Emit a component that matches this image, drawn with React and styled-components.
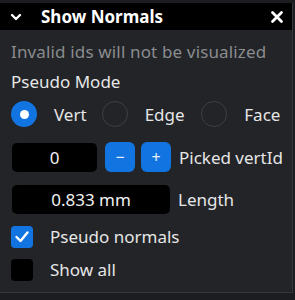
import React, { useState } from 'react'
import styled, { createGlobalStyle } from 'styled-components'

const Global = createGlobalStyle`
    html, body {
        margin: 0;
        padding: 0;
        background: #1b1d20;
    }
    body {
        font-family: "Noto Sans", "Open Sans", sans-serif;
        width: 295px;
        height: 300px;
        overflow: hidden;
    }
`

const Panel = styled.div`
    width: 293px;
    height: 290px;
    margin-top: 3px;
    background: #222428;
    border-right: 1px solid #34373c;
    border-bottom: 1px solid #34373c;
    box-sizing: border-box;
    color: #e6e6e6;
`

const TitleBar = styled.div`
    height: 27px;
    background: #000;
    display: flex;
    align-items: center;
    padding: 0 8px 0 10px;
    font-weight: 700;
    font-size: 17px;
    color: #fff;
`

const Title = styled.span`
    flex: 1;
    margin-left: 19px;
`

const Body = styled.div`
    padding: 7px 11px 0 11px;
    display: flex;
    flex-direction: column;
`

const Note = styled.div`
    color: #8a8c8f;
    font-size: 17px;
    letter-spacing: 0.15px;
    line-height: 30px;
    white-space: nowrap;
`

const Label = styled.div`
    font-size: 17px;
    line-height: 30px;
`

const RadioRow = styled.div`
    display: flex;
    align-items: center;
    height: 34px;
`

const RadioItem = styled.label`
    display: flex;
    align-items: center;
    width: ${p => p.w}px;
    font-size: 17px;
`

const RadioDot = styled.span`
    width: 26px;
    height: 26px;
    border-radius: 50%;
    box-sizing: border-box;
    background: ${p => (p.on ? '#1274e0' : '#222428')};
    border: ${p => (p.on ? 'none' : '1px solid #3d4045')};
    display: flex;
    align-items: center;
    justify-content: center;
    margin-right: 17px;
    &::after {
        content: '';
        width: 9px;
        height: 9px;
        border-radius: 50%;
        background: #fff;
        display: ${p => (p.on ? 'block' : 'none')};
    }
`

const FieldRow = styled.div`
    display: flex;
    align-items: center;
    height: 30px;
    white-space: nowrap;
    margin-top: ${p => p.mt || 0}px;
`

const Field = styled.div`
    flex: none;
    width: ${p => p.w}px;
    height: 29px;
    background: #000;
    border-radius: 5px;
    display: flex;
    align-items: center;
    justify-content: center;
    font-size: 17px;
    color: #f2f2f2;
    margin-left: 1px;
`

const StepButton = styled.button`
    flex: none;
    width: 30px;
    height: 30px;
    border: none;
    border-radius: 6px;
    background: #1274e0;
    color: #e8f0fb;
    font-family: inherit;
    font-size: 16px;
    padding: 0;
    margin-left: ${p => p.ml}px;
    display: flex;
    align-items: center;
    justify-content: center;
`

const FieldLabel = styled.span`
    font-size: 17px;
    margin-left: 8px;
`

const CheckRow = styled.label`
    display: flex;
    align-items: center;
    height: 33px;
    font-size: 17px;
    margin-top: ${p => p.mt || 0}px;
`

const CheckBox = styled.span`
    width: 22px;
    height: 22px;
    border-radius: 4px;
    background: ${p => (p.on ? '#1274e0' : '#000')};
    display: flex;
    align-items: center;
    justify-content: center;
    margin-right: 17px;
`

const Chevron = () => (
    <svg width="12" height="8" viewBox="0 0 12 8">
        <path d="M2 2 L6 6 L10 2" stroke="#fff" strokeWidth="2.4" fill="none" strokeLinecap="round" strokeLinejoin="round" />
    </svg>
)

const Close = () => (
    <svg width="14" height="14" viewBox="0 0 14 14">
        <path d="M2.5 2.5 L11.5 11.5 M11.5 2.5 L2.5 11.5" stroke="#fff" strokeWidth="2.8" strokeLinecap="round" />
    </svg>
)

const Check = () => (
    <svg width="16" height="14" viewBox="0 0 16 14">
        <path d="M2.5 7 L6.5 11 L13.5 2.5" stroke="#fff" strokeWidth="2.4" fill="none" strokeLinecap="round" strokeLinejoin="round" />
    </svg>
)

const App = () => {
    const [mode, setMode] = useState('Vert')
    return (
        <>
            <Global />
            <Panel>
                <TitleBar>
                    <Chevron />
                    <Title>Show Normals</Title>
                    <Close />
                </TitleBar>
                <Body>
                    <Note>Invalid ids will not be visualized</Note>
                    <Label>Pseudo Mode</Label>
                    <RadioRow>
                        {[['Vert', 91], ['Edge', 100], ['Face', 80]].map(([m, w]) => (
                            <RadioItem key={m} w={w} onClick={() => setMode(m)}>
                                <RadioDot on={mode === m} />
                                {m}
                            </RadioItem>
                        ))}
                    </RadioRow>
                    <FieldRow mt={11}>
                        <Field w={85}>0</Field>
                        <StepButton ml={8}>−</StepButton>
                        <StepButton ml={6}>+</StepButton>
                        <FieldLabel>Picked vertId</FieldLabel>
                    </FieldRow>
                    <FieldRow mt={12}>
                        <Field w={158}>0.833 mm</Field>
                        <FieldLabel>Length</FieldLabel>
                    </FieldRow>
                    <CheckRow mt={6}>
                        <CheckBox on>
                            <Check />
                        </CheckBox>
                        Pseudo normals
                    </CheckRow>
                    <CheckRow>
                        <CheckBox />
                        Show all
                    </CheckRow>
                </Body>
            </Panel>
        </>
    )
}

export default App
